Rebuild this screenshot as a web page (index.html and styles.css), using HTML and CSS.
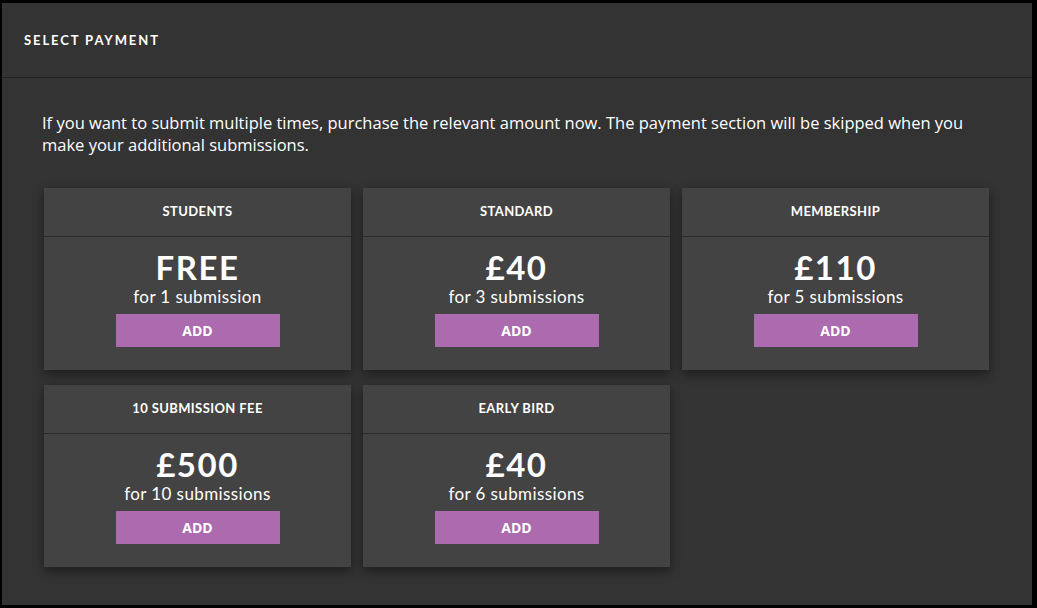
FILE: index.html
```html
<!DOCTYPE html>
<html lang="en">
<head>
  <meta charset="UTF-8">
  <meta name="viewport" content="width=device-width, initial-scale=1.0">
  <title>Select Payment</title>
  <link rel="stylesheet" href="styles.css">
</head>
<body>
  <div class="panel">
    <div class="panel-head">SELECT PAYMENT</div>
    <div class="panel-body">
      <p class="intro">If you want to submit multiple times, purchase the relevant amount now. The payment section will be skipped when you make your additional submissions.</p>
      <div class="options">
        <div class="option">
          <div class="option-title">STUDENTS</div>
          <div class="option-body">
            <div class="price">FREE</div>
            <div class="count">for 1 submission</div>
            <button class="add">ADD</button>
          </div>
        </div>
        <div class="option">
          <div class="option-title">STANDARD</div>
          <div class="option-body">
            <div class="price">£40</div>
            <div class="count">for 3 submissions</div>
            <button class="add">ADD</button>
          </div>
        </div>
        <div class="option">
          <div class="option-title">MEMBERSHIP</div>
          <div class="option-body">
            <div class="price">£110</div>
            <div class="count">for 5 submissions</div>
            <button class="add">ADD</button>
          </div>
        </div>
        <div class="option">
          <div class="option-title">10 SUBMISSION FEE</div>
          <div class="option-body">
            <div class="price">£500</div>
            <div class="count">for 10 submissions</div>
            <button class="add">ADD</button>
          </div>
        </div>
        <div class="option">
          <div class="option-title">EARLY BIRD</div>
          <div class="option-body">
            <div class="price">£40</div>
            <div class="count">for 6 submissions</div>
            <button class="add">ADD</button>
          </div>
        </div>
      </div>
    </div>
  </div>
</body>
</html>
```

FILE: styles.css
```css
html, body {
  height: 100%;
}
body {
  margin: 0;
  padding: 3px 5px 3px 2px;
  box-sizing: border-box;
  background-color: #000;
  font-family: "Open Sans", "Noto Sans", sans-serif;
  color: #fff;
}
.panel {
  height: 100%;
  background-color: #333;
}
.panel-head {
  height: 74px;
  line-height: 74px;
  padding-left: 22px;
  border-bottom: 1px solid #222;
  font-family: Lato, sans-serif;
  font-size: 13px;
  font-weight: bold;
  letter-spacing: 1.9px;
}
.panel-body {
  padding: 34px 40px 0 40px;
}
.intro {
  margin: 0 0 32px 0;
  font-size: 16.5px;
  line-height: 22px;
}
.options {
  display: grid;
  grid-template-columns: repeat(3, 307px);
  column-gap: 12px;
  row-gap: 15px;
  padding-left: 2px;
}
.option {
  background-color: #434343;
  box-shadow: 0 4px 10px rgba(0, 0, 0, 0.45);
  text-align: center;
}
.option-title {
  height: 48px;
  line-height: 47px;
  border-bottom: 1px solid #2b2b2b;
  font-family: Lato, sans-serif;
  font-size: 13px;
  font-weight: bold;
  letter-spacing: 0.4px;
}
.option-body {
  padding: 11px 0 23px 0;
}
.price {
  font-family: Lato, sans-serif;
  font-size: 33px;
  font-weight: bold;
  line-height: 38px;
  letter-spacing: 1.5px;
}
.count {
  margin-top: 1px;
  font-family: Lato, sans-serif;
  font-size: 17px;
  line-height: 20px;
  letter-spacing: 0.4px;
}
.add {
  display: block;
  width: 164px;
  height: 33px;
  margin: 7px auto 0 auto;
  border: none;
  background-color: #ab6bae;
  color: #fff;
  font-family: inherit;
  font-size: 14px;
  font-weight: bold;
  line-height: 31px;
}
```
